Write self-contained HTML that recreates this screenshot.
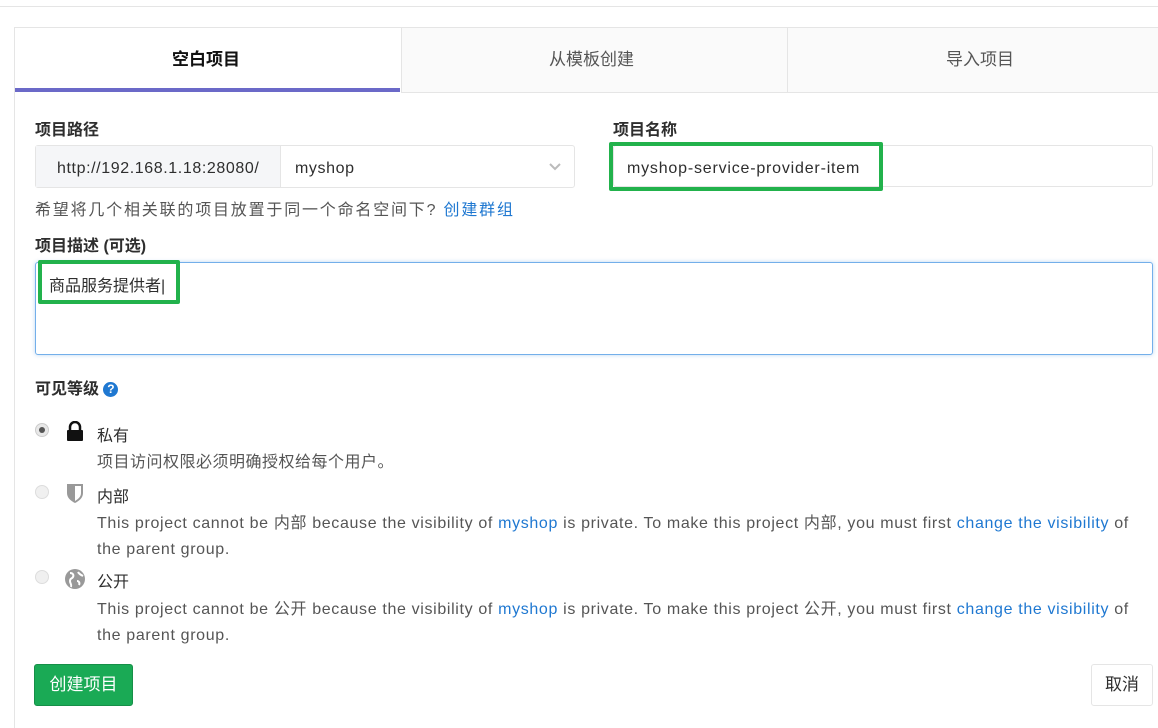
<!DOCTYPE html>
<html><head><meta charset="utf-8"><style>
body{margin:0;width:1158px;height:714px;overflow:hidden;background:#fff;font-family:"Liberation Sans","Noto Sans CJK SC",sans-serif;font-size:16px;color:#2e2e2e;position:relative}
.a{position:absolute;white-space:nowrap;line-height:28px}
.b{font-weight:bold;color:#2e2e2e}
.g{color:#555}
.l{color:#1f78d1}
.sm{font-size:16px;letter-spacing:0.65px}
</style></head><body>
<div class="a" style="left:0;top:6px;width:1158px;height:1px;background:#e5e5e5"></div>
<div class="a" style="left:14px;top:27px;width:1150px;height:700px;border-left:1px solid #e5e5e5;border-top:1px solid #e5e5e5"></div>
<div class="a" style="left:401px;top:28px;width:760px;height:64px;background:#fafafa;border-bottom:1px solid #e5e5e5;border-left:1px solid #e5e5e5"></div>
<div class="a" style="left:787px;top:28px;width:1px;height:64px;background:#e5e5e5"></div>
<div class="a" style="left:15px;top:88px;width:385px;height:4px;background:#6b69c8"></div>
<div class="a b" style="left:172px;top:46px;font-size:17px;color:#111">空白项目</div>
<div class="a g" style="left:549px;top:46px;font-size:17px">从模板创建</div>
<div class="a g" style="left:946px;top:46px;font-size:17px">导入项目</div>

<div class="a b" style="left:35px;top:117px">项目路径</div>
<div class="a" style="left:35px;top:145px;width:538px;height:41px;border:1px solid #e5e5e5;border-radius:3px"></div>
<div class="a" style="left:36px;top:146px;width:244px;height:41px;background:#f5f6f8;border-right:1px solid #e5e5e5"></div>
<div class="a" style="left:57px;top:155px;letter-spacing:0.6px">http://192.168.1.18:28080/</div>
<div class="a" style="left:295px;top:155px;letter-spacing:0.6px">myshop</div>
<svg class="a" style="left:549px;top:163px" width="12" height="8" viewBox="0 0 12 8"><path d="M1 1l5 5 5-5" fill="none" stroke="#bbb" stroke-width="2"/></svg>
<div class="a g" style="left:35px;top:197px;letter-spacing:1.8px">希望将几个相关联的项目放置于同一个命名空间下? <span class="l">创建群组</span></div>

<div class="a b" style="left:613px;top:117px">项目名称</div>
<div class="a" style="left:613px;top:145px;width:538px;height:40px;border:1px solid #e5e5e5;border-radius:3px"></div>
<div class="a" style="left:609px;top:142px;width:266px;height:41px;border:4px solid #22b24c;border-radius:2px"></div>
<div class="a" style="left:627px;top:155px;letter-spacing:0.8px">myshop-service-provider-item</div>

<div class="a b" style="left:35px;top:233px">项目描述 (可选)</div>
<div class="a" style="left:35px;top:262px;width:1116px;height:91px;border:1px solid #73afea;border-radius:3px;box-shadow:0 0 4px rgba(31,120,209,.3)"></div>
<div class="a" style="left:38px;top:260px;width:134px;height:36px;border:4px solid #22b24c;border-radius:2px"></div>
<div class="a" style="left:49px;top:273px">商品服务提供者|</div>

<div class="a b" style="left:35px;top:376px">可见等级 <span style="display:inline-block;width:15px;height:15px;border-radius:50%;background:#1f78d1;color:#fff;font-size:12px;text-align:center;line-height:15px;vertical-align:1px">?</span></div>

<div class="a" style="left:35px;top:423px;width:12px;height:12px;border-radius:50%;background:#e8e8e8;border:1px solid #ccc"></div>
<div class="a" style="left:39px;top:427px;width:6px;height:6px;border-radius:50%;background:#555"></div>
<svg class="a" style="left:66px;top:421px" width="18" height="20" viewBox="0 0 18 20"><path d="M4 9V6a5 5 0 0 1 10 0v3" fill="none" stroke="#111" stroke-width="2.5"/><rect x="1" y="9" width="16" height="11" rx="1" fill="#111"/></svg>
<div class="a" style="left:97px;top:423px">私有</div>
<div class="a g" style="left:97px;top:449px;letter-spacing:0.5px">项目访问权限必须明确授权给每个用户。</div>

<div class="a" style="left:35px;top:485px;width:12px;height:12px;border-radius:50%;background:#f0f0f0;border:1px solid #ddd"></div>
<svg class="a" style="left:66px;top:483px" width="18" height="21" viewBox="0 0 18 21"><path d="M1 1h16v9c0 5-4 8-8 10C5 18 1 15 1 10z" fill="#999"/><path d="M9 3h6v7c0 4-3 6-6 8z" fill="#fff"/></svg>
<div class="a" style="left:97px;top:484px">内部</div>
<div class="a g sm" style="left:97px;top:510px">This project cannot be 内部 because the visibility of <span class="l">myshop</span> is private. To make this project 内部, you must first <span class="l">change the visibility</span> of</div>
<div class="a g sm" style="left:97px;top:536px">the parent group.</div>

<div class="a" style="left:35px;top:570px;width:12px;height:12px;border-radius:50%;background:#f0f0f0;border:1px solid #ddd"></div>
<svg class="a" style="left:65px;top:569px" width="20" height="20" viewBox="0 0 20 20"><circle cx="10" cy="10" r="10" fill="#999"/><path d="M5 4c3 0 4 2 3 4s-3 1-3 4 2 3 1 6M13 3c1 2 3 3 5 4M12 12c2 0 3 2 2 4" fill="none" stroke="#fff" stroke-width="2"/></svg>
<div class="a" style="left:97px;top:569px">公开</div>
<div class="a g sm" style="left:97px;top:596px">This project cannot be 公开 because the visibility of <span class="l">myshop</span> is private. To make this project 公开, you must first <span class="l">change the visibility</span> of</div>
<div class="a g sm" style="left:97px;top:622px">the parent group.</div>

<div class="a" style="left:34px;top:664px;width:97px;height:40px;background:#1aaa55;border:1px solid #168f48;border-radius:3px;color:#fff;text-align:center;line-height:40px;font-size:17px">创建项目</div>
<div class="a" style="left:1091px;top:664px;width:60px;height:40px;background:#fff;border:1px solid #e5e5e5;border-radius:3px;color:#2e2e2e;text-align:center;line-height:40px;font-size:17px">取消</div>
</body></html>
